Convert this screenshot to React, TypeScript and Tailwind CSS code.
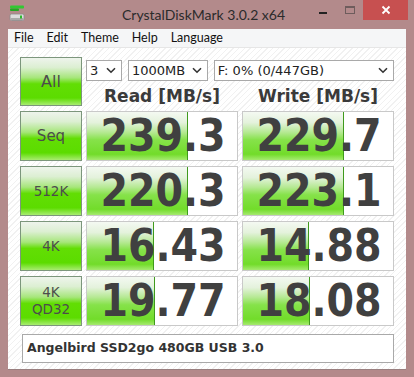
import React from "react";

const rows = [
  { label: ["Seq"], read: "239.3", write: "229.7", rw: 101, ww: 101, hand: true },
  { label: ["512K"], read: "220.3", write: "223.1", rw: 101, ww: 101, hand: false },
  { label: ["4K"], read: "16.43", write: "14.88", rw: 67, ww: 66, hand: false },
  { label: ["4K", "QD32"], read: "19.77", write: "18.08", rw: 68, ww: 67, hand: false },
];

function GreenButton({ children, className = "" }: { children: React.ReactNode; className?: string }) {
  return (
    <div
      className={
        "flex flex-col items-center justify-center border border-[#7c967c] text-[#4c4c4c] bg-[linear-gradient(to_bottom,#eef4ec_0%,#dcefd2_20%,#a6e67a_42%,#62de04_55%,#5cdc00_85%,#a8ec70_100%)] " +
        className
      }
    >
      {children}
    </div>
  );
}

function ValueBox({ value, bar }: { value: string; bar: number }) {
  return (
    <div className="relative flex h-[50px] items-center justify-center border border-[#c9c9c9] bg-white">
      <div
        className="absolute left-0 top-0 bottom-0 border-r border-[#3f9a1c] bg-[linear-gradient(to_bottom,#f4f9f2_0%,#e4f2dc_22%,#b6e994_42%,#86e24a_58%,#72dc2a_88%,#a6ea70_100%)]"
        style={{ width: bar }}
      />
      <span className="relative font-['DejaVu_Sans_Condensed','DejaVu_Sans',sans-serif] text-[44px] font-bold leading-none text-[#404040] pl-[2px]">
        {value}
      </span>
    </div>
  );
}

function Select({ text, w }: { text: string; w: number }) {
  return (
    <div
      className="flex h-[21px] items-center justify-between border border-[#a9a9a9] bg-white pl-[3px] pr-[5px] text-[13px] text-[#222]"
      style={{ width: w }}
    >
      <span>{text}</span>
      <svg width="10" height="7" viewBox="0 0 10 7">
        <path d="M1 1.2 L5 5.2 L9 1.2" fill="none" stroke="#333" strokeWidth="1.6" />
      </svg>
    </div>
  );
}

export default function App() {
  return (
    <div className="h-[377px] w-[414px] bg-[#b38a8b] font-['DejaVu_Sans',sans-serif]">
      {/* title bar */}
      <div className="relative flex h-[29px] items-start">
        <div className="ml-[9px] mt-[5px]">
          <svg width="17" height="17" viewBox="0 0 17 17">
            <rect x="1" y="0.5" width="14" height="3" rx="1" fill="#32c832" />
            <rect x="1" y="3.5" width="9" height="2.5" rx="1" fill="#22a822" />
            <rect x="1" y="9" width="14" height="6.5" rx="1.5" fill="#dcdcdc" stroke="#8a8a8a" strokeWidth="0.8" />
            <rect x="1.5" y="13" width="13" height="2" fill="#a9a9a9" />
            <rect x="11" y="10.5" width="2" height="3" fill="#2cb82c" />
          </svg>
        </div>
        <div className="flex-1 pt-[5px] pl-[96px] font-['Lato',sans-serif] text-[14px] leading-[20px] text-[#2b2b2b]">
          CrystalDiskMark 3.0.2 x64
        </div>
        <div className="flex h-[20px] items-start">
          <div className="flex h-[20px] w-[27px] items-center justify-center">
            <div className="mt-[5px] h-[2px] w-[8px] bg-[#222]" />
          </div>
          <div className="flex h-[20px] w-[27px] items-center justify-center">
            <div className="mb-[1px] h-[8px] w-[10px] border border-[#6e5c5c] border-t-2" />
          </div>
          <div className="mr-[6px] flex h-[20px] w-[45px] items-center justify-center bg-[#c75050]">
            <svg width="10" height="10" viewBox="0 0 10 10">
              <path d="M1.5 1.5 L8.5 8.5 M8.5 1.5 L1.5 8.5" stroke="#fff" strokeWidth="1.8" />
            </svg>
          </div>
        </div>
      </div>

      {/* window body */}
      <div className="mx-[8px] flex h-[341px] flex-col border-b border-[#9a8080] bg-white">
        {/* menu */}
        <div className="flex h-[19px] items-center gap-[13px] border-b border-[#e6e6e6] bg-[#f5f6f7] pl-[6px] font-['Lato',sans-serif] text-[12.5px] text-[#111]">
          <span>File</span>
          <span>Edit</span>
          <span>Theme</span>
          <span>Help</span>
          <span>Language</span>
        </div>

        {/* content */}
        <div className="flex-1 bg-[repeating-linear-gradient(135deg,#ffffff_0px,#ffffff_3px,#f1f1f1_3px,#f1f1f1_4px)] pl-[12px] pt-[9px]">
          <div className="grid grid-cols-[62px_152px_152px] gap-x-[4px] gap-y-[5px]">
            <GreenButton className="h-[49px] text-[16px]">All</GreenButton>
            <div className="col-span-2 flex flex-col">
              <div className="mt-[3px] flex h-[21px] gap-[6px]">
                <Select text="3" w={36} />
                <Select text="1000MB" w={80} />
                <Select text="F: 0% (0/447GB)" w={181} />
              </div>
              <div className="mt-[6px] grid grid-cols-[152px_152px] gap-x-[4px] text-[17px] font-bold leading-[18px] text-[#3a3a3a]">
                <div className="text-center">Read [MB/s]</div>
                <div className="text-center">Write [MB/s]</div>
              </div>
            </div>

            {rows.map((r, i) => (
              <React.Fragment key={i}>
                <GreenButton className={"h-[50px] leading-[17px] " + (r.hand ? "text-[15px]" : "text-[13.5px]")}>
                  {r.label.map((l) => (
                    <span key={l}>{l}</span>
                  ))}
                </GreenButton>
                <ValueBox value={r.read} bar={r.rw} />
                <ValueBox value={r.write} bar={r.ww} />
              </React.Fragment>
            ))}
          </div>

          <div className="mt-[8px] ml-[2px] flex h-[29px] w-[372px] items-center border border-[#a9a9a9] bg-white pl-[4px] text-[12.5px] font-bold text-[#333]">
            Angelbird SSD2go 480GB USB 3.0
          </div>
        </div>
      </div>
    </div>
  );
}
